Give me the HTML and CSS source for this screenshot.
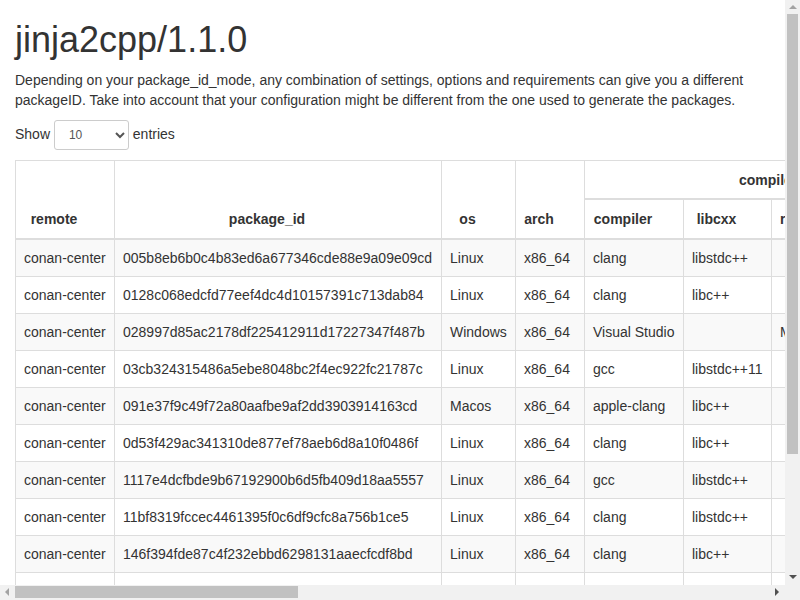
FILE: index.html
```html
<!DOCTYPE html>
<html lang="en">
<head>
<meta charset="utf-8">
<title>jinja2cpp/1.1.0</title>
<link rel="stylesheet" href="styles.css">
</head>
<body>
<div class="page">
  <h1 class="title">jinja2cpp/1.1.0</h1>
  <p class="lead-text">Depending on your package_id_mode, any combination of settings, options and requirements can give you a different packageID. Take into account that your configuration might be different from the one used to generate the packages.</p>
  <div class="dt-top">
    <label class="dt-length">Show <select class="dt-select">
        <option>10</option>
        <option>25</option>
        <option>50</option>
        <option>100</option>
      </select> entries</label>
  </div>
  <table class="packages">
    <thead>
      <tr>
        <th rowspan="2" class="sort">remote</th>
        <th rowspan="2" class="sort">package_id</th>
        <th rowspan="2" class="sort">os</th>
        <th rowspan="2" class="sort">arch</th>
        <th colspan="4" class="group">compiler</th>
        <th rowspan="2" class="sort">build_type</th>
        <th colspan="2" class="group">options</th>
        <th rowspan="2" class="sort">requires</th>
      </tr>
      <tr>
        <th class="sort">compiler</th>
        <th class="sort">libcxx</th>
        <th class="sort">runtime</th>
        <th class="sort">version</th>
        <th class="sort">fPIC</th>
        <th class="sort">shared</th>
      </tr>
    </thead>
    <tbody>
      <tr><td>conan-center</td><td>005b8eb6b0c4b83ed6a677346cde88e9a09e09cd</td><td>Linux</td><td>x86_64</td><td>clang</td><td>libstdc++</td><td></td><td>11</td><td>Release</td><td>True</td><td>False</td><td class="req">boost/1.75.0, expected-lite/0.5.0, fmt/6.2.1, nlohmann_json/3.9.1, optional-lite/3.4.0, rapidjson/cci.20200410, string-view-lite/1.6.0, variant-lite/1.2.2</td></tr>
      <tr><td>conan-center</td><td>0128c068edcfd77eef4dc4d10157391c713dab84</td><td>Linux</td><td>x86_64</td><td>clang</td><td>libc++</td><td></td><td>10</td><td>Debug</td><td>True</td><td>False</td><td class="req">boost/1.75.0, expected-lite/0.5.0, fmt/6.2.1, nlohmann_json/3.9.1, optional-lite/3.4.0, rapidjson/cci.20200410, string-view-lite/1.6.0, variant-lite/1.2.2</td></tr>
      <tr><td>conan-center</td><td>028997d85ac2178df225412911d17227347f487b</td><td>Windows</td><td>x86_64</td><td>Visual Studio</td><td></td><td>MD</td><td>16</td><td>Release</td><td></td><td>False</td><td class="req">boost/1.75.0, expected-lite/0.5.0, fmt/6.2.1, nlohmann_json/3.9.1, optional-lite/3.4.0, rapidjson/cci.20200410, string-view-lite/1.6.0, variant-lite/1.2.2</td></tr>
      <tr><td>conan-center</td><td>03cb324315486a5ebe8048bc2f4ec922fc21787c</td><td>Linux</td><td>x86_64</td><td>gcc</td><td>libstdc++11</td><td></td><td>9</td><td>Release</td><td>True</td><td>False</td><td class="req">boost/1.75.0, expected-lite/0.5.0, fmt/6.2.1, nlohmann_json/3.9.1, optional-lite/3.4.0, rapidjson/cci.20200410, string-view-lite/1.6.0, variant-lite/1.2.2</td></tr>
      <tr><td>conan-center</td><td>091e37f9c49f72a80aafbe9af2dd3903914163cd</td><td>Macos</td><td>x86_64</td><td>apple-clang</td><td>libc++</td><td></td><td>12.0</td><td>Debug</td><td>True</td><td>False</td><td class="req">boost/1.75.0, expected-lite/0.5.0, fmt/6.2.1, nlohmann_json/3.9.1, optional-lite/3.4.0, rapidjson/cci.20200410, string-view-lite/1.6.0, variant-lite/1.2.2</td></tr>
      <tr><td>conan-center</td><td>0d53f429ac341310de877ef78aeb6d8a10f0486f</td><td>Linux</td><td>x86_64</td><td>clang</td><td>libc++</td><td></td><td>11</td><td>Release</td><td>True</td><td>False</td><td class="req">boost/1.75.0, expected-lite/0.5.0, fmt/6.2.1, nlohmann_json/3.9.1, optional-lite/3.4.0, rapidjson/cci.20200410, string-view-lite/1.6.0, variant-lite/1.2.2</td></tr>
      <tr><td>conan-center</td><td>1117e4dcfbde9b67192900b6d5fb409d18aa5557</td><td>Linux</td><td>x86_64</td><td>gcc</td><td>libstdc++</td><td></td><td>7</td><td>Debug</td><td>True</td><td>False</td><td class="req">boost/1.75.0, expected-lite/0.5.0, fmt/6.2.1, nlohmann_json/3.9.1, optional-lite/3.4.0, rapidjson/cci.20200410, string-view-lite/1.6.0, variant-lite/1.2.2</td></tr>
      <tr><td>conan-center</td><td>11bf8319fccec4461395f0c6df9cfc8a756b1ce5</td><td>Linux</td><td>x86_64</td><td>clang</td><td>libstdc++</td><td></td><td>9</td><td>Debug</td><td>True</td><td>False</td><td class="req">boost/1.75.0, expected-lite/0.5.0, fmt/6.2.1, nlohmann_json/3.9.1, optional-lite/3.4.0, rapidjson/cci.20200410, string-view-lite/1.6.0, variant-lite/1.2.2</td></tr>
      <tr><td>conan-center</td><td>146f394fde87c4f232ebbd6298131aaecfcdf8bd</td><td>Linux</td><td>x86_64</td><td>clang</td><td>libc++</td><td></td><td>10</td><td>Release</td><td>True</td><td>False</td><td class="req">boost/1.75.0, expected-lite/0.5.0, fmt/6.2.1, nlohmann_json/3.9.1, optional-lite/3.4.0, rapidjson/cci.20200410, string-view-lite/1.6.0, variant-lite/1.2.2</td></tr>
      <tr><td>conan-center</td><td>15a3d1c8f0b2e47d9a6c5b1e3f7d2a8c4b6e0f91</td><td>Linux</td><td>x86_64</td><td>gcc</td><td>libstdc++</td><td></td><td>10</td><td>Release</td><td>True</td><td>False</td><td class="req">boost/1.75.0, expected-lite/0.5.0, fmt/6.2.1, nlohmann_json/3.9.1, optional-lite/3.4.0, rapidjson/cci.20200410, string-view-lite/1.6.0, variant-lite/1.2.2</td></tr>
    </tbody>
  </table>
  <div class="dt-bottom">
    <div class="dt-info">Showing 1 to 10 of 48 entries</div>
    <ul class="pager">
      <li class="pg disabled">Previous</li>
      <li class="pg active">1</li>
      <li class="pg">2</li>
      <li class="pg">3</li>
      <li class="pg">4</li>
      <li class="pg">5</li>
      <li class="pg">Next</li>
    </ul>
  </div>
</div>

<div class="sb-v">
  <span class="arr arr-up"></span>
  <div class="thumb-v"></div>
  <span class="arr arr-down"></span>
</div>
<div class="sb-h">
  <span class="arr arr-left"></span>
  <div class="thumb-h"></div>
  <span class="arr arr-right"></span>
</div>
<div class="sb-corner"></div>
</body>
</html>
```

FILE: styles.css
```css
html {
  overflow: hidden;
}
html, body {
  margin: 0;
  padding: 0;
}
body {
  font-family: "Liberation Sans", Arial, Helvetica, sans-serif;
  font-size: 14px;
  line-height: 20px;
  color: #333;
  background: #fff;
}
.page {
  padding: 0 15px 60px 15px;
}
.title {
  font-size: 36px;
  font-weight: 500;
  line-height: 1.1;
  margin: 20px 0 10px 0;
}
.lead-text {
  margin: 0 0 10px 0;
}
.dt-top {
  height: 30px;
}
.dt-length {
  display: inline-block;
  font-weight: normal;
  white-space: nowrap;
  margin-bottom: 5px;
}
.dt-select {
  width: 75px;
  height: 30px;
  padding: 5px 10px;
  font-size: 12px;
  line-height: 1.5;
  border: 1px solid #ccc;
  border-radius: 3px;
  color: #555;
  background: #fff;
  font-family: "Liberation Sans", Arial, sans-serif;
  vertical-align: middle;
  margin: 0;
}
.packages {
  width: max-content;
  border-collapse: collapse;
  border-spacing: 0;
  border: 1px solid #ddd;
  margin-top: 10px;
  margin-bottom: 6px;
}
.packages th,
.packages td {
  border: 1px solid #ddd;
  padding: 8px;
  line-height: 20px;
  white-space: nowrap;
  text-align: left;
  vertical-align: top;
}
.packages th {
  font-weight: bold;
  vertical-align: bottom;
  text-align: center;
  border-bottom-width: 2px;
  padding-top: 9px;
  padding-bottom: 9px;
}
.packages th.group {
  padding-bottom: 8px;
}
.packages th.sort {
  padding-right: 30px;
}
.packages tbody tr:nth-child(odd) {
  background: #f9f9f9;
}
.packages tbody td {
  box-sizing: border-box;
}
.packages tbody td:nth-child(1) { width: 99px; }
.packages tbody td:nth-child(2) { width: 327px; }
.packages tbody td:nth-child(3) { width: 74px; }
.packages tbody td:nth-child(4) { width: 69px; }
.packages tbody td:nth-child(5) { width: 99px; }
.packages tbody td:nth-child(6) { width: 88px; }
.packages tbody td:nth-child(7) { width: 90px; }
.packages tbody td:nth-child(8) { width: 90px; }
.packages td.req {
  padding-right: 40px;
}
.dt-bottom {
  display: flex;
  justify-content: space-between;
  align-items: flex-start;
  width: 770px;
}
.dt-info {
  padding-top: 8px;
}
.pager {
  display: flex;
  list-style: none;
  margin: 2px 0;
  padding: 0;
}
.pg {
  padding: 6px 12px;
  border: 1px solid #ddd;
  margin-left: -1px;
  color: #337ab7;
  background: #fff;
}
.pg:first-child {
  border-radius: 4px 0 0 4px;
}
.pg:last-child {
  border-radius: 0 4px 4px 0;
}
.pg.active {
  background: #337ab7;
  border-color: #337ab7;
  color: #fff;
}
.pg.disabled {
  color: #777;
}

/* drawn window scrollbars (overlay) */
.sb-v {
  position: fixed;
  top: 0;
  right: 0;
  width: 15px;
  height: 585px;
  background: #f1f1f1;
  display: flex;
  flex-direction: column;
  align-items: center;
}
.sb-h {
  position: fixed;
  left: 0;
  bottom: 0;
  width: 785px;
  height: 15px;
  background: #f1f1f1;
  display: flex;
  align-items: flex-start;
}
.sb-corner {
  position: fixed;
  right: 0;
  bottom: 0;
  width: 15px;
  height: 15px;
  background: #f1f1f1;
}
.thumb-v {
  width: 11px;
  height: 440px;
  background: #c1c1c1;
  margin-top: 5px;
}
.thumb-h {
  width: 283px;
  height: 12px;
  background: #c1c1c1;
  margin-top: 1px;
}
.arr {
  display: block;
  width: 0;
  height: 0;
  flex: none;
}
.arr-up {
  margin-top: 5px;
  border-left: 4px solid transparent;
  border-right: 4px solid transparent;
  border-bottom: 4px solid #a3a3a3;
}
.arr-down {
  margin-top: auto;
  margin-bottom: 6px;
  border-left: 4px solid transparent;
  border-right: 4px solid transparent;
  border-top: 4px solid #505050;
}
.arr-left {
  margin-top: 3px;
  margin-left: 5px;
  margin-right: 6px;
  border-top: 4px solid transparent;
  border-bottom: 4px solid transparent;
  border-right: 4px solid #a3a3a3;
}
.arr-right {
  margin-top: 3px;
  margin-left: auto;
  margin-right: 6px;
  border-top: 4px solid transparent;
  border-bottom: 4px solid transparent;
  border-left: 4px solid #505050;
}
```
